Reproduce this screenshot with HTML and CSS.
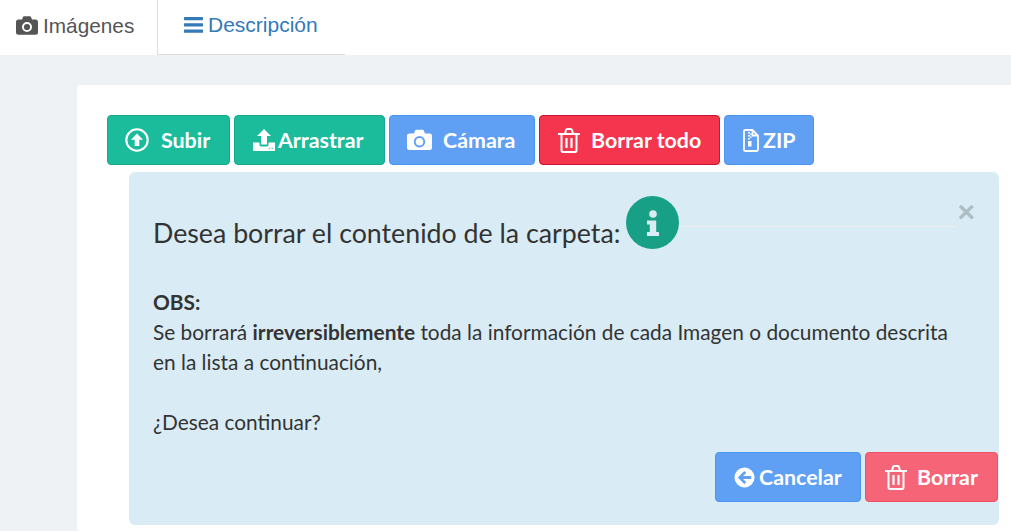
FILE: index.html
```html
<!DOCTYPE html>
<html>
<head>
  <title>Imágenes</title>
  <meta charset="utf-8">
  <link rel="stylesheet" href="styles.css">
</head>
<body>
  <!-- Tabs -->
  <div class="tabs">
    <div class="tab tab-active">
      <svg class="tab-icon" viewBox="0 0 22 20" width="22" height="20"><path fill="#555" fill-rule="evenodd" d="M2.500 3.500H6l1-2.600C7.200.5 7.600.2 8 .2h6c.4 0 .8.3 1 .7l1 2.600h3.500A2.500 2.500 0 0 1 22 6v10.300a2.500 2.500 0 0 1-2.500 2.500h-17A2.500 2.500 0 0 1 0 16.300V6a2.500 2.500 0 0 1 2.500-2.500zM11 6a5 5 0 1 0 0 10 5 5 0 0 0 0-10zm0 1.900a3.100 3.100 0 1 1 0 6.200 3.100 3.100 0 0 1 0-6.200z"/></svg>
      Imágenes
    </div>
    <div class="tab tab-link">
      <svg class="tab-icon" viewBox="0 0 19 16" width="19" height="16"><g fill="#337ab7"><rect width="19" height="3.200" rx=".6"/><rect y="6.300" width="19" height="3.200" rx=".6"/><rect y="12.600" width="19" height="3.200" rx=".6"/></g></svg>
      Descripción
    </div>
  </div>

  <div class="content">
    <div class="card">
      <!-- Toolbar -->
      <div class="toolbar">
        <div class="btn btn-green btn-subir">
          <svg viewBox="0 0 24 24" width="24" height="24"><circle cx="12" cy="12" r="10.700" fill="none" stroke="#fff" stroke-width="2.100"/><path fill="#fff" d="M12 5.500l6 6.200h-3.700V18h-4.600v-6.300H6z"/></svg>
          <span>Subir</span>
        </div>
        <div class="btn btn-green btn-arrastrar">
          <svg viewBox="0 0 22 22" width="22" height="22"><path fill="#fff" d="M11 0l7 7h-4v8.500H8V7H4z"/><path fill="#fff" fill-rule="evenodd" d="M0 13.500h6.500v2.600c0 .8.700 1.400 1.500 1.400h6c.8 0 1.500-.6 1.500-1.400v-2.600H22V22H0zM15.500 18.800v1h1.500v-1zm3 0v1H20v-1z"/></svg>
          <span>Arrastrar</span>
        </div>
        <div class="btn btn-blue btn-camara">
          <svg viewBox="0 0 25 22" width="25" height="22"><path fill="#fff" fill-rule="evenodd" d="M2.500 4.500H7L8.200 1.400C8.400 1 8.800.7 9.200.7h6.600c.4 0 .8.300 1 .7L18 4.500h4.500A2.500 2.500 0 0 1 25 7v11.500a2.500 2.500 0 0 1-2.500 2.500h-20A2.500 2.500 0 0 1 0 18.500V7a2.500 2.500 0 0 1 2.500-2.500zm10 2.500a5.700 5.700 0 1 0 0 11.400 5.700 5.700 0 0 0 0-11.400zm0 1.900a3.800 3.800 0 1 1 0 7.600 3.800 3.800 0 0 1 0-7.600z"/></svg>
          <span>Cámara</span>
        </div>
        <div class="btn btn-red btn-todo">
          <svg viewBox="0 0 22 25" width="22" height="25"><path fill="none" stroke="#fff" stroke-width="2" d="M0 6h22M3.500 6v16.200c0 1 .8 1.800 1.800 1.800h11.400c1 0 1.800-.8 1.800-1.800V6M7 6l1-4c.2-.6.600-1 1.300-1h3.400c.7 0 1.100.4 1.300 1l1 4"/><path fill="none" stroke="#fff" stroke-width="2.200" d="M8.500 10v10M13.500 10v10"/></svg>
          <span>Borrar todo</span>
        </div>
        <div class="btn btn-blue btn-zip">
          <svg viewBox="0 0 16 23" width="16" height="23"><path fill="none" stroke="#fff" stroke-width="1.800" d="M1 2.200C1 1.500 1.500 1 2.200 1h7.300L15 6.500v14.300c0 .7-.5 1.200-1.200 1.200H2.200C1.500 22 1 21.500 1 20.800zM9.500 1v5.500H15"/><path fill="#fff" d="M5 3h2v1.500H5zM7 4.500h1.500V6H7zM5 6h2v1.500H5zM7 7.500h1.500V9H7zM5 9h2v1.500H5zM5 12h3.500v5.500H5z"/></svg>
          <span>ZIP</span>
        </div>
      </div>

      <!-- Confirm box -->
      <div class="alert">
        <div class="alert-close">×</div>
        <div class="alert-head">
          <div class="alert-title">Desea borrar el contenido de la carpeta:</div>
          <div class="info-circle">
            <svg viewBox="0 0 14 26" width="14" height="26"><circle cx="7" cy="4" r="3.800" fill="#d9ecf5"/><path fill="#d9ecf5" d="M1 10.500h9.200V22H13v4H1v-4h2.800v-7.500H1z"/></svg>
          </div>
          <div class="alert-line"></div>
        </div>
        <div class="alert-text">
          <b>OBS:</b><br>
          Se borrará <b>irreversiblemente</b> toda la información de cada Imagen o documento descrita<br>
          en la lista a continuación,<br>
          <br>
          ¿Desea continuar?
        </div>
        <div class="alert-actions">
          <div class="btn btn-blue btn-cancelar">
            <svg viewBox="0 0 22 22" width="21" height="21"><circle cx="11" cy="11" r="10.500" fill="#fff"/><path fill="#5fa0f5" d="M4 11l6.800-6.800 2 2-3.300 3.200H18v3.200H9.500l3.300 3.200-2 2z"/></svg>
            <span>Cancelar</span>
          </div>
          <div class="btn btn-red-soft btn-borrar">
            <svg viewBox="0 0 22 25" width="22" height="25"><path fill="none" stroke="#fff" stroke-width="2" d="M0 6h22M3.500 6v16.200c0 1 .8 1.800 1.800 1.800h11.400c1 0 1.800-.8 1.800-1.800V6M7 6l1-4c.2-.6.600-1 1.300-1h3.400c.7 0 1.100.4 1.300 1l1 4"/><path fill="none" stroke="#fff" stroke-width="2.200" d="M8.500 10v10M13.500 10v10"/></svg>
            <span>Borrar</span>
          </div>
        </div>
      </div>
    </div>
  </div>
</body>
</html>
```

FILE: styles.css
```css
* {
  box-sizing: border-box;
}

body {
  margin: 0;
  height: 531px;
  overflow: hidden;
  background: #eef2f5;
  font-family: 'Lato', sans-serif;
  color: #333;
}

.tabs {
  display: flex;
  height: 55px;
  background: #fff;
}

.tab {
  display: flex;
  align-items: center;
  gap: 5px;
  font-family: 'Liberation Sans', Arial, sans-serif;
  font-size: 20.8px;
}

.tab-active {
  width: 158px;
  padding: 0 0 4px 16px;
  border-right: 1px solid #ddd;
  color: #555;
}

.tab-link {
  width: 187px;
  padding: 0 0 4px 26px;
  border-bottom: 1px solid #ddd;
  color: #337ab7;
  font-size: 21px;
}

.content {
  padding: 30px 0 0 77px;
}

.card {
  height: 446px;
  padding: 30px 0 0 30px;
  background: #fff;
  border-radius: 4px 0 0 4px;
}

.toolbar {
  display: flex;
  gap: 4px;
}

.btn {
  display: flex;
  align-items: center;
  height: 50px;
  border: 1px solid;
  border-radius: 4px;
  color: #fff;
  font-size: 21.4px;
  font-weight: 700;
}

.btn-green {
  background: #1abc9c;
  border-color: #18a98c;
}

.btn-blue {
  background: #5fa0f5;
  border-color: #4a94f2;
}

.btn-red {
  background: #f5344d;
  border-color: #c9152f;
}

.btn-red-soft {
  background: #f66477;
  border-color: #f0505f;
}

.btn-subir {
  width: 123px;
  padding-left: 17px;
  gap: 12px;
}

.btn-arrastrar {
  width: 151px;
  padding-left: 18px;
  gap: 3px;
}

.btn-camara {
  width: 146px;
  padding-left: 17px;
  gap: 11px;
}

.btn-todo {
  width: 181px;
  padding-left: 18px;
  gap: 11px;
}

.btn-zip {
  width: 90px;
  padding-left: 18px;
  gap: 4px;
}

.btn-cancelar {
  width: 146px;
  padding-left: 18px;
  gap: 4px;
}

.btn-borrar {
  width: 133px;
  padding-left: 19px;
  gap: 10px;
}

.alert {
  position: relative;
  width: 870px;
  height: 353px;
  margin: 7px 0 0 22px;
  padding: 24px 0 0 24px;
  background: #d9ecf5;
  border-radius: 6px;
}

.alert-close {
  position: absolute;
  top: 23px;
  right: 24px;
  color: #aebdc4;
  font-family: 'Liberation Sans', Arial, sans-serif;
  font-size: 30px;
  font-weight: 700;
  line-height: 34px;
}

.alert-head {
  display: flex;
  align-items: flex-start;
}

.alert-title {
  margin-top: 20px;
  font-size: 26.75px;
  line-height: 34px;
  white-space: nowrap;
}

.info-circle {
  display: flex;
  align-items: center;
  justify-content: center;
  width: 53px;
  height: 53px;
  margin-left: 6px;
  background: #17a085;
  border-radius: 50%;
}

.alert-line {
  width: 277px;
  height: 1px;
  margin-top: 30px;
  background: #eeeeee;
}

.alert-text {
  margin-top: 37px;
  font-size: 20.85px;
  line-height: 30px;
}

.alert-actions {
  display: flex;
  justify-content: flex-end;
  gap: 4px;
  margin: 15px 1px 0 0;
}
```
